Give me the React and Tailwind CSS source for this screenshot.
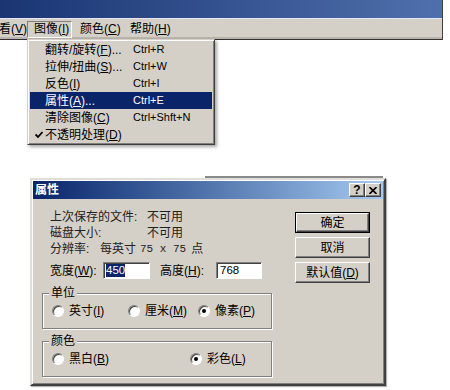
import React from 'react';

const U = ({ children }) => <span className="underline underline-offset-[1px]">{children}</span>;

const Radio = ({ checked }) => (
  <span className="flex items-center justify-center w-[12px] h-[12px] rounded-full bg-white border border-t-[#808080] border-l-[#808080] border-b-white border-r-white shadow-[inset_1px_1px_0_#404040,1px_1px_0_#d4d0c8]">
    {checked && <span className="w-[4px] h-[4px] rounded-full bg-black" />}
  </span>
);

const Button = ({ children, def }) => (
  <div className={`h-[21px] flex items-center justify-center bg-[#d4d0c8] ${def ? 'border border-black' : ''}`}>
    <div className="w-full h-full flex items-center justify-center border border-t-white border-l-white border-r-[#404040] border-b-[#404040] shadow-[inset_-1px_-1px_0_#808080]">
      {children}
    </div>
  </div>
);

const menuItems = [
  { label: '翻转/旋转', key: 'F', dots: '...', sc: 'Ctrl+R' },
  { label: '拉伸/扭曲', key: 'S', dots: '...', sc: 'Ctrl+W' },
  { label: '反色', key: 'I', dots: '', sc: 'Ctrl+I' },
  { label: '属性', key: 'A', dots: '...', sc: 'Ctrl+E', hl: true },
  { label: '清除图像', key: 'C', dots: '', sc: 'Ctrl+Shft+N' },
  { label: '不透明处理', key: 'D', dots: '', sc: '', check: true },
];

export default function App() {
  return (
    <div className="relative w-[450px] h-[390px] bg-white overflow-hidden text-[12px] text-black font-['Liberation_Sans','Noto_Sans_CJK_SC',sans-serif]">
      {/* main window top */}
      <div className="w-[443px] border-r border-[#404040]">
        <div className="h-[18px] bg-linear-to-r from-[#1b3573] to-[#4f70ac]" />
        <div className="h-[22px] bg-[#d4d0c8] border-t border-[#e8e6f2] border-b border-b-[#303030] shadow-[inset_0_-2px_0_#b8b4ac] flex items-center leading-none">
          <span className="ml-[-1px] w-[28px]">看(<U>V</U>)</span>
          <span className="w-[45px] h-[17px] flex items-center pl-[6px] border border-t-[#808080] border-l-[#808080] border-r-white border-b-white">图像(<U>I</U>)</span>
          <span className="ml-[8px] w-[50px]">颜色(<U>C</U>)</span>
          <span>帮助(<U>H</U>)</span>
        </div>
      </div>

      {/* dropdown menu */}
      <div className="absolute left-[27px] top-[39px] w-[188px] h-[106px] bg-[#d4d0c8] border border-t-[#d4d0c8] border-l-[#d4d0c8] border-r-[#404040] border-b-[#404040] shadow-[inset_1px_1px_0_#fff,inset_-1px_-1px_0_#808080,2px_2px_3px_rgba(0,0,0,0.35)] p-[1px]">
        {menuItems.map((m) => (
          <div key={m.label} className={`h-[17px] mx-[1px] flex items-center leading-none ${m.hl ? 'bg-[#0a246a] text-white' : ''}`}>
            <span className="w-[15px] flex justify-center pl-[2px]">
              {m.check && (
                <svg width="8" height="8" viewBox="0 0 8 8"><path d="M0.5 3.5 L3 6 L7.5 1" fill="none" stroke="black" strokeWidth="1.8" /></svg>
              )}
            </span>
            <span className="w-[88px]">{m.label}(<U>{m.key}</U>){m.dots}</span>
            <span className="text-[11px] font-['Liberation_Sans',sans-serif]">{m.sc}</span>
          </div>
        ))}
      </div>

      {/* dialog */}
      <div className="mt-[136px] ml-[30px]">
        <div className="ml-[175px] w-[178px] h-[2px] bg-[#8a8a8a]" />
        <div className="w-[356px] h-[208px] bg-[#d4d0c8] border-2 border-t-[#e0ded8] border-l-[#e0ded8] border-r-[#404040] border-b-[#404040] shadow-[inset_1px_1px_0_#fff,inset_-1px_-1px_0_#808080,1px_1px_1px_rgba(0,0,0,0.3)] p-[1px]">
          <div className="h-[18px] flex items-center justify-between bg-linear-to-r from-[#0a246a] to-[#a6caf0] pl-[2px] pr-[2px]">
            <span className="text-white font-bold text-[12px] leading-none">属性</span>
            <div className="flex">
              {['?', '×'].map((g) => (
                <div key={g} className="w-[16px] h-[14px] bg-[#d4d0c8] flex items-center justify-center border border-t-white border-l-white border-r-[#404040] border-b-[#404040] shadow-[inset_-1px_-1px_0_#808080] text-[12px] font-bold leading-none">
                  {g === '?' ? '?' : <svg width="8" height="7" viewBox="0 0 8 7"><path d="M0.5 0 L7.5 7 M7.5 0 L0.5 7" stroke="black" strokeWidth="1.6" /></svg>}
                </div>
              ))}
            </div>
          </div>

          <div className="flex">
            {/* left column */}
            <div className="ml-[9px] w-[230px]">
              <div className="pt-[10px] ml-[8px] text-[#222]">
                <div className="h-[16px] flex items-center"><span className="w-[97px]">上次保存的文件:</span><span>不可用</span></div>
                <div className="h-[16px] flex items-center"><span className="w-[97px]">磁盘大小:</span><span>不可用</span></div>
                <div className="h-[16px] flex items-center whitespace-nowrap">
                  <span className="w-[50px]">分辨率:</span>
                  <span>每英寸</span>
                  <span className="ml-[4px] mr-[5px] font-['Liberation_Mono',monospace] text-[11px]">75 x 75</span>
                  <span>点</span>
                </div>
              </div>
              <div className="mt-[5px] ml-[8px] h-[17px] flex items-center">
                <span className="w-[53px]">宽度(<U>W</U>):</span>
                <div className="w-[47px] h-[17px] bg-white border border-t-[#808080] border-l-[#808080] border-r-white border-b-white shadow-[inset_1px_1px_0_#404040] flex items-center pl-[2px]">
                  <span className="bg-[#0a246a] text-white leading-[13px] text-[11.5px]">450</span>
                </div>
                <span className="ml-[10px] w-[56px]">高度(<U>H</U>):</span>
                <div className="w-[46px] h-[17px] bg-white border border-t-[#808080] border-l-[#808080] border-r-white border-b-white shadow-[inset_1px_1px_0_#404040] flex items-center pl-[3px] text-[11.5px]">
                  768
                </div>
              </div>

              <div className="relative mt-[14px] h-[36px] border border-[#808080] shadow-[1px_1px_0_#fff,inset_1px_1px_0_#fff] flex items-center pl-[9px]">
                <span className="absolute left-[6px] top-[-8px] bg-[#d4d0c8] px-[2px] leading-[14px]">单位</span>
                <div className="w-[76px] flex items-center gap-[5px]"><Radio /><span>英寸(<U>I</U>)</span></div>
                <div className="w-[70px] flex items-center gap-[5px]"><Radio /><span>厘米(<U>M</U>)</span></div>
                <div className="flex items-center gap-[5px]"><Radio checked /><span>像素(<U>P</U>)</span></div>
              </div>

              <div className="relative mt-[12px] h-[36px] border border-[#808080] shadow-[1px_1px_0_#fff,inset_1px_1px_0_#fff] flex items-center pl-[9px]">
                <span className="absolute left-[6px] top-[-8px] bg-[#d4d0c8] px-[2px] leading-[14px]">颜色</span>
                <div className="w-[138px] flex items-center gap-[5px]"><Radio /><span>黑白(<U>B</U>)</span></div>
                <div className="flex items-center gap-[5px]"><Radio checked /><span>彩色(<U>L</U>)</span></div>
              </div>
            </div>

            {/* right column */}
            <div className="ml-[23px] w-[75px] pt-[13px] flex flex-col gap-[4px]">
              <Button def>确定</Button>
              <Button>取消</Button>
              <Button>默认值(<U>D</U>)</Button>
            </div>
          </div>
        </div>
      </div>
    </div>
  );
}
